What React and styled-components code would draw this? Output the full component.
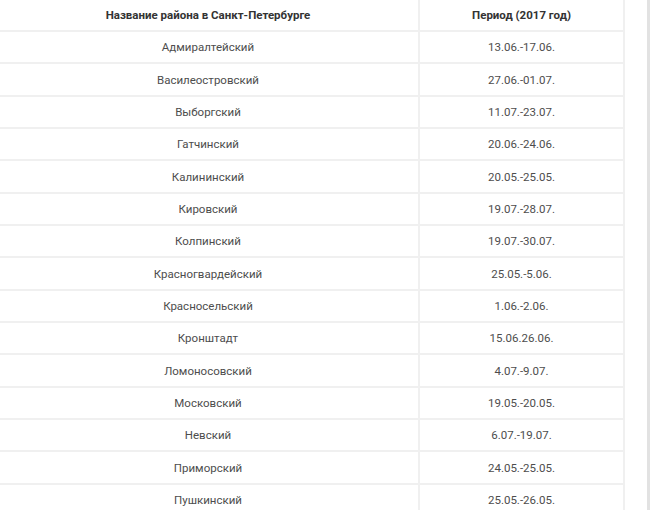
import styled, { createGlobalStyle } from "styled-components";

const GlobalStyle = createGlobalStyle`
    html, body {
        margin: 0;
        padding: 0;
        background: #fff;
    }
    body {
        font-family: Roboto, "Noto Sans", sans-serif;
    }
`

const Page = styled.div`
    display: flex;
    width: 650px;
    height: 510px;
    overflow: hidden;
    background: #fff;
`

const Content = styled.div`
    flex: 1;
    margin-left: -2px;
`

const ScrollEdge = styled.div`
    width: 3px;
    background: #e2e2e2;
`

const Table = styled.table`
    width: 623px;
    border-collapse: collapse;
    table-layout: fixed;
`

const HeadCell = styled.th`
    height: 30px;
    padding: 0;
    font-size: 11.5px;
    font-weight: 700;
    color: #333;
    text-align: center;
    border-right: 2px solid #f0f0f0;
    border-bottom: 2px solid #f0f0f0;
    width: ${(props) => props.width}px;
`

const Cell = styled.td`
    height: 30.35px;
    padding: 0;
    font-size: 11.5px;
    color: #4d4d4d;
    text-align: center;
    border-right: 2px solid #f0f0f0;
    border-bottom: 2px solid #f0f0f0;
`

const rows = [
    ["Адмиралтейский", "13.06.-17.06."],
    ["Василеостровский", "27.06.-01.07."],
    ["Выборгский", "11.07.-23.07."],
    ["Гатчинский", "20.06.-24.06."],
    ["Калининский", "20.05.-25.05."],
    ["Кировский", "19.07.-28.07."],
    ["Колпинский", "19.07.-30.07."],
    ["Красногвардейский", "25.05.-5.06."],
    ["Красносельский", "1.06.-2.06."],
    ["Кронштадт", "15.06.26.06."],
    ["Ломоносовский", "4.07.-9.07."],
    ["Московский", "19.05.-20.05."],
    ["Невский", "6.07.-19.07."],
    ["Приморский", "24.05.-25.05."],
    ["Пушкинский", "25.05.-26.05."],
]

export default function App() {
    return (
        <>
            <GlobalStyle />
            <Page>
                <Content>
                    <Table>
                        <thead>
                            <tr>
                                <HeadCell width={420}>Название района в Санкт-Петербурге</HeadCell>
                                <HeadCell width={203}>Период (2017 год)</HeadCell>
                            </tr>
                        </thead>
                        <tbody>
                            {rows.map(([name, period]) => (
                                <tr key={name}>
                                    <Cell>{name}</Cell>
                                    <Cell>{period}</Cell>
                                </tr>
                            ))}
                        </tbody>
                    </Table>
                </Content>
                <ScrollEdge />
            </Page>
        </>
    )
}
